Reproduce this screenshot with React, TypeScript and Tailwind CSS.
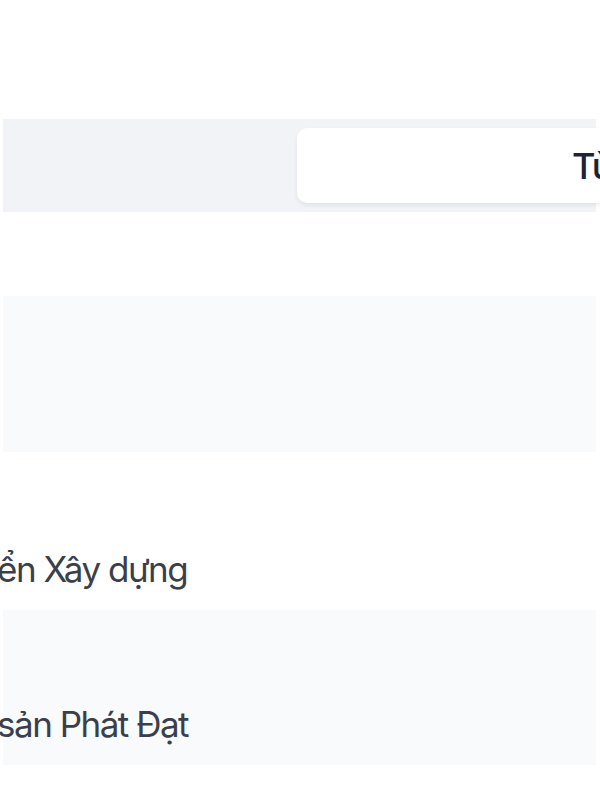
import React from "react";

export default function App() {
  return (
    <div
      className="w-[600px] h-[800px] overflow-hidden bg-white"
      style={{ fontFamily: "Inter, 'Noto Sans', sans-serif" }}
    >
      <div className="pt-[119px] pl-[3px] pr-[4px]">
        {/* tab bar */}
        <div className="h-[93px] bg-[#f1f3f7] flex items-center pl-[294px]">
          <div className="h-[75px] w-[400px] shrink-0 bg-white rounded-[10px] shadow-[0_2px_4px_rgba(15,23,42,0.08)] flex items-center pl-[275px]">
            <span className="text-[36px] font-medium tracking-[-1px] text-[#1e2330] whitespace-nowrap leading-none">
              Tùy chọn
            </span>
          </div>
        </div>

        {/* table rows */}
        <div className="mt-[84px]">
          <div className="h-[156px] bg-[#f9fafb]" />
          <div className="h-[158px] bg-white flex items-end pb-[18px]">
            <span className="text-[35px] leading-[46px] tracking-[-1.5px] text-[#3a3f4b] whitespace-nowrap -ml-[6px]">
              ển Xây dựng
            </span>
          </div>
          <div className="h-[155px] bg-[#f9fafb] flex items-end pb-[18px]">
            <span className="text-[35px] leading-[46px] tracking-[-1.5px] text-[#3a3f4b] whitespace-nowrap -ml-[6px]">
              sản Phát Đạt
            </span>
          </div>
        </div>
      </div>
    </div>
  );
}
